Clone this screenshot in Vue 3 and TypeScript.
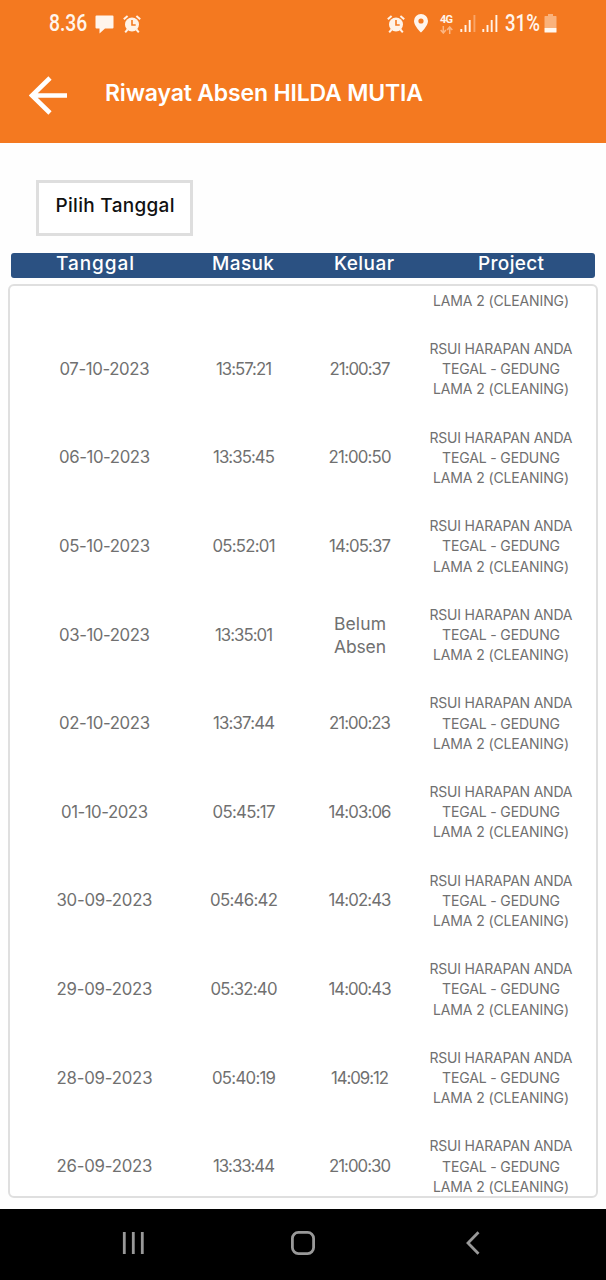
<script setup lang="ts">
import type { Directive } from 'vue'

interface Row {
  date: string
  dateWidth: number
  masuk: string
  masukWidth: number
  keluar: string[]
  keluarWidths: number[]
}

// Tracks a label out (or in) so that it occupies the given width.
const vTrack: Directive<HTMLElement, number> = {
  mounted(el, { value }) {
    const count = (el.textContent ?? '').length
    if (count < 2) return
    const spacing = (value - el.getBoundingClientRect().width) / (count - 1)
    el.style.letterSpacing = `${spacing}px`
    el.style.marginRight = `${-spacing}px`
  },
}

const headings = [
  { label: 'Tanggal', width: 78 },
  { label: 'Masuk', width: 62 },
  { label: 'Keluar', width: 60 },
  { label: 'Project', width: 66 },
]

const project = [
  { text: 'RSUI HARAPAN ANDA', width: 143 },
  { text: 'TEGAL - GEDUNG', width: 118 },
  { text: 'LAMA 2 (CLEANING)', width: 136 },
]

const row = (
  date: string,
  dateWidth: number,
  masuk: string,
  masukWidth: number,
  keluar: string[],
  keluarWidths: number[],
): Row => ({ date, dateWidth, masuk, masukWidth, keluar, keluarWidths })

const rows: Row[] = [
  row('07-10-2023', 90, '13:57:21', 56, ['21:00:37'], [61]),
  row('06-10-2023', 91, '13:35:45', 62, ['21:00:50'], [63]),
  row('05-10-2023', 91, '05:52:01', 63, ['14:05:37'], [62]),
  row('03-10-2023', 91, '13:35:01', 58, ['Belum', 'Absen'], [52, 52]),
  row('02-10-2023', 91, '13:37:44', 62, ['21:00:23'], [62]),
  row('01-10-2023', 87, '05:45:17', 63, ['14:03:06'], [63]),
  row('30-09-2023', 96, '05:46:42', 68, ['14:02:43'], [63]),
  row('29-09-2023', 96, '05:32:40', 67, ['14:00:43'], [63]),
  row('28-09-2023', 96, '05:40:19', 64, ['14:09:12'], [58]),
  row('26-09-2023', 96, '13:33:44', 62, ['21:00:30'], [62]),
]
</script>

<template>
  <div class="screen">
    <header class="top">
      <div class="status">
        <span class="clock">8.36</span>
        <svg class="chat" width="20" height="20" viewBox="0 0 20 20">
          <path d="M1.5 0.5H17.5Q18.5 .5 18.5 1.5V12.5Q18.5 13.5 17.5 13.5H10L4.5 18.5V13.5H1.5Q.5 13.5 .5 12.5V1.5Q.5 .5 1.5 .5Z" fill="#fff5ec" />
        </svg>
        <svg class="alarm left" width="18" height="18" viewBox="0 0 18 18">
          <circle cx="9" cy="9.5" r="7" fill="#fff2e6" />
          <path d="M.8 4.2L4.6 .9M17.2 4.2L13.4 .9M4.6 14.5L2.2 17.3M13.4 14.5L15.8 17.3" stroke="#fff2e6" stroke-width="2" />
          <path d="M9 5V10H12.7" fill="none" stroke="#f47920" stroke-width="1.6" />
        </svg>
        <svg class="alarm right" width="18" height="18" viewBox="0 0 18 18">
          <circle cx="9" cy="9.5" r="7" fill="#fff2e6" />
          <path d="M.8 4.2L4.6 .9M17.2 4.2L13.4 .9M4.6 14.5L2.2 17.3M13.4 14.5L15.8 17.3" stroke="#fff2e6" stroke-width="2" />
          <path d="M9 5V10H12.7" fill="none" stroke="#f47920" stroke-width="1.6" />
        </svg>
        <svg class="pin" width="14" height="19" viewBox="0 0 14 19">
          <path d="M7 0A7 7 0 0 0 0 7C0 12 7 18.5 7 18.5S14 12 14 7A7 7 0 0 0 7 0ZM7 4.4A2.6 2.6 0 1 1 7 9.6A2.6 2.6 0 0 1 7 4.4Z" fill="#fff5ec" />
        </svg>
        <div class="network">
          <span v-track="13" class="generation">4G</span>
          <svg width="13" height="8" viewBox="0 0 13 8">
            <path d="M3.3 0V6.5M.7 4L3.3 7L5.9 4M9.7 8V1.5M7.1 4L9.7 1L12.3 4" fill="none" stroke="#fbb582" stroke-width="1.5" />
          </svg>
        </div>
        <svg class="signal one" width="16" height="17" viewBox="0 0 16 17">
          <path d="M1.3 14V17M5.5 10V17M9.7 5V17" stroke="#fff2e6" stroke-width="1.9" />
          <path d="M14.4 0V17" stroke="#f9a567" stroke-width="1.9" />
        </svg>
        <svg class="signal two" width="16" height="17" viewBox="0 0 16 17">
          <path d="M1.3 14V17M5.5 10V17M9.7 5V17M14.4 0V17" stroke="#fff2e6" stroke-width="1.9" />
        </svg>
        <span class="percent">31%</span>
        <svg class="battery" width="13" height="19" viewBox="0 0 13 19">
          <path d="M4 0H9V2H12Q12.5 2 12.5 3V14H.5V3Q.5 2 1 2H4Z" fill="#fab27b" />
          <path d="M.5 14H12.5V18Q12.5 18.5 12 18.5H1Q.5 18.5 .5 18Z" fill="#fff8f0" />
        </svg>
      </div>
      <div class="bar">
        <svg class="back" width="39" height="39" viewBox="0 0 39 39">
          <path d="M38 19.5H3M21 2L3 19.5L21 37" fill="none" stroke="#fff" stroke-width="4.6" />
        </svg>
        <h1 class="title"><span v-track="318">Riwayat Absen HILDA MUTIA</span></h1>
      </div>
    </header>

    <main class="content">
      <button class="pick" type="button"><span v-track="119">Pilih Tanggal</span></button>

      <div class="heading">
        <div v-for="h in headings" :key="h.label"><span v-track="h.width">{{ h.label }}</span></div>
      </div>

      <section class="card">
        <div class="cut"><span v-track="project[2].width">{{ project[2].text }}</span></div>
        <div v-for="r in rows" :key="r.date" class="row">
          <div class="cell"><span v-track="r.dateWidth">{{ r.date }}</span></div>
          <div class="cell"><span v-track="r.masukWidth">{{ r.masuk }}</span></div>
          <div class="cell" :class="{ words: r.keluar.length > 1 }">
            <span v-for="(k, i) in r.keluar" :key="k" v-track="r.keluarWidths[i]">{{ k }}</span>
          </div>
          <div class="cell project">
            <span v-for="p in project" :key="p.text" v-track="p.width">{{ p.text }}</span>
          </div>
        </div>
      </section>
    </main>

    <nav class="nav">
      <svg class="recent" width="24" height="24" viewBox="0 0 24 24">
        <path d="M2.3 1V23M11.3 1V23M20.3 1V23" stroke="#999" stroke-width="2.8" />
      </svg>
      <svg class="home" width="24" height="24" viewBox="0 0 24 24">
        <rect x="1.4" y="1.4" width="21.2" height="21.2" rx="6" fill="none" stroke="#999" stroke-width="2.8" />
      </svg>
      <svg class="prev" width="14" height="24" viewBox="0 0 14 24">
        <path d="M12.5 1.2L2 12L12.5 22.8" fill="none" stroke="#999" stroke-width="2.8" />
      </svg>
    </nav>
  </div>
</template>

<style>
body {
  margin: 0;
  background: #fff;
}
</style>

<style scoped>
.screen {
  width: 606px;
  height: 1280px;
  overflow: hidden;
  display: flex;
  flex-direction: column;
  background: #fefefe;
  font-family: Inter, "Open Sans", sans-serif;
}

span {
  display: inline-block;
  white-space: nowrap;
}

svg {
  display: block;
  flex: none;
}

.top {
  height: 143px;
  flex: none;
  background: #f47920;
  color: #fff;
}

.status {
  height: 47px;
  display: flex;
  align-items: center;
  padding-left: 49px;
  font-family: Roboto, sans-serif;
  color: #fff5ec;
}

.clock,
.percent {
  flex: none;
  font-size: 23px;
  font-weight: 500;
  line-height: 24px;
  transform-origin: left center;
}

.clock {
  width: 38px;
  transform: scaleX(0.84);
}

.percent {
  width: 36px;
  margin-left: 7px;
  transform: scaleX(0.81);
}

.chat {
  margin: 2px 0 0 8px;
}

.alarm.left {
  margin-left: 8px;
}

.alarm.right {
  margin-left: 246px;
}

.pin {
  margin-left: 9px;
}

.network {
  margin: 1px 0 0 12px;
  display: flex;
  flex-direction: column;
  gap: 1px;
}

.generation {
  font-size: 11px;
  font-weight: 700;
  line-height: 10px;
}

.signal.one {
  margin-left: 7px;
}

.signal.two {
  margin-left: 6px;
}

.battery {
  margin: 0 0 1px 3px;
}

.bar {
  height: 96px;
  display: flex;
  align-items: flex-start;
  padding-left: 29px;
}

.back {
  margin-top: 29px;
}

.title {
  margin: 31px 0 0 37px;
  font-size: 23px;
  font-weight: 600;
  line-height: 30px;
}

.content {
  height: 1066px;
  flex: none;
  box-sizing: border-box;
  padding: 37px 8px 0;
}

.pick {
  display: block;
  box-sizing: border-box;
  width: 157px;
  height: 56px;
  margin: 0 0 17px 28px;
  padding: 0 0 4px 1px;
  border: 3px solid #dedede;
  background: #fff;
  color: #111;
  font: 500 19px/24px Inter, sans-serif;
}

.heading {
  height: 25px;
  margin: 0 3px;
  display: grid;
  grid-template-columns: 168px 128px 114px 180px;
  border-radius: 3px;
  background: #2b5182;
  color: #fff;
  text-align: center;
  font-size: 19px;
  font-weight: 500;
  line-height: 22px;
}

.card {
  box-sizing: border-box;
  height: 914px;
  margin-top: 6px;
  overflow: hidden;
  border: 2px solid #dfdfdf;
  border-radius: 6px;
  background: #fff;
  color: #707070;
}

.cut {
  height: 39px;
  display: flex;
  justify-content: center;
  margin-left: 421px;
  width: 140px;
  padding-top: 5px;
  box-sizing: border-box;
  font-size: 14px;
  line-height: 20px;
}

.row {
  height: 88.6px;
  display: grid;
  grid-template-columns: 189px 90px 142px 140px;
  align-items: center;
}

.cell {
  display: flex;
  flex-direction: column;
  align-items: center;
  font-size: 16.8px;
  line-height: 23px;
}

.words {
  font-size: 17.5px;
}

.project {
  font-size: 14px;
  line-height: 20.2px;
}

.nav {
  height: 71px;
  flex: none;
  box-sizing: border-box;
  padding-bottom: 3px;
  display: flex;
  align-items: center;
  background: #000;
}

.recent {
  margin-left: 122px;
}

.home {
  margin-left: 145px;
}

.prev {
  margin-left: 151px;
}
</style>
